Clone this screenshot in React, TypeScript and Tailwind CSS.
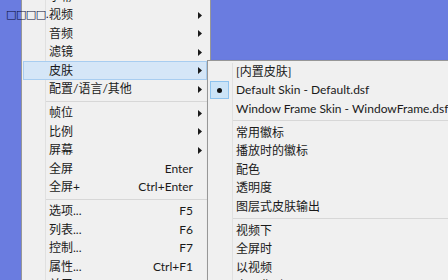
type Item =
  | { sep: true }
  | { sep?: false; label: string; key?: string; arrow?: boolean; active?: boolean; checked?: boolean };

const mainItems: Item[] = [
  { label: '字幕', arrow: true },
  { label: '视频', arrow: true },
  { label: '音频', arrow: true },
  { label: '滤镜', arrow: true },
  { label: '皮肤', arrow: true, active: true },
  { label: '配置/语言/其他', arrow: true },
  { sep: true },
  { label: '帧位', arrow: true },
  { label: '比例', arrow: true },
  { label: '屏幕', arrow: true },
  { label: '全屏', key: 'Enter' },
  { label: '全屏+', key: 'Ctrl+Enter' },
  { sep: true },
  { label: '选项...', key: 'F5' },
  { label: '列表...', key: 'F6' },
  { label: '控制...', key: 'F7' },
  { label: '属性...', key: 'Ctrl+F1' },
  { label: '关于...', key: 'F1' },
];

const skinItems: Item[] = [
  { label: '[内置皮肤]' },
  { label: 'Default Skin - Default.dsf', checked: true },
  { label: 'Window Frame Skin - WindowFrame.dsf' },
  { sep: true },
  { label: '常用徽标' },
  { label: '播放时的徽标' },
  { label: '配色' },
  { label: '透明度' },
  { label: '图层式皮肤输出' },
  { sep: true },
  { label: '视频下' },
  { label: '全屏时' },
  { label: '以视频' },
  { label: '窗口化时显示' },
];

function Arrow() {
  return (
    <svg width="4" height="7" viewBox="0 0 4 7" className="shrink-0">
      <path d="M0 0 L4 3.5 L0 7 Z" fill="#1a1a1a" />
    </svg>
  );
}

function Menu({ items, gutter, keyCol }: { items: Item[]; gutter: number; keyCol?: boolean }) {
  return (
    <div className="relative">
      {/* icon gutter line */}
      <div className="absolute top-0 bottom-0 w-px bg-[#e0e0e0]" style={{ left: gutter }} />
      {items.map((it, i) =>
        it.sep ? (
          <div key={i} className="flex h-[5.5px] items-center" style={{ paddingLeft: gutter }}>
            <div className="h-px w-full bg-[#d7d7d7]" />
          </div>
        ) : (
          <div
            key={i}
            className={`relative flex h-[18.5px] items-center pr-[4px] ${
              it.active ? 'border border-[#a8cdf0] bg-[#d5e6f7]' : 'border border-transparent'
            }`}
          >
            {it.checked && (
              <div className="absolute left-0 top-[-1px] flex h-[18px] w-[19px] items-center justify-center border border-[#8ec3ee] bg-[#cce4f7]">
                <div className="h-[5px] w-[5px] rounded-full bg-[#111]" />
              </div>
            )}
            <span className="whitespace-nowrap" style={{ paddingLeft: gutter + 3 }}>
              {it.label}
            </span>
            {keyCol && (
              <>
                <span className="ml-auto whitespace-nowrap">{it.key}</span>
                <span className="ml-[5px] flex w-[4px] justify-end">{it.arrow && <Arrow />}</span>
              </>
            )}
          </div>
        )
      )}
    </div>
  );
}

export default function App() {
  return (
    <div className="relative h-[280px] w-[448px] overflow-hidden bg-[#6a7ce0] font-['Lato','Noto_Sans_CJK_SC',sans-serif] text-[12px] leading-none text-[#1a1a1a]">
      {/* main context menu */}
      <div className="absolute left-[21px] top-[-15.75px] w-[190px] border border-[#979797] bg-[#f0f0f0] py-[2px] pl-px pr-[3px]">
        <Menu items={mainItems} gutter={22} keyCol />
      </div>

      {/* skin submenu */}
      <div className="absolute left-[207px] top-[60px] w-[260px] border border-[#979797] bg-[#f0f0f0] pl-px pt-[1.5px] shadow-[2px_2px_3px_rgba(0,0,0,0.25)]">
        <Menu items={skinItems} gutter={23} />
      </div>

      {/* window title overlapping the menu */}
      <div className="absolute left-[6px] top-[9px] font-['DejaVu_Sans',sans-serif] text-[11px] leading-none tracking-[-0.5px] text-[#0b0b3a]">
        □□□□..
      </div>
    </div>
  );
}
